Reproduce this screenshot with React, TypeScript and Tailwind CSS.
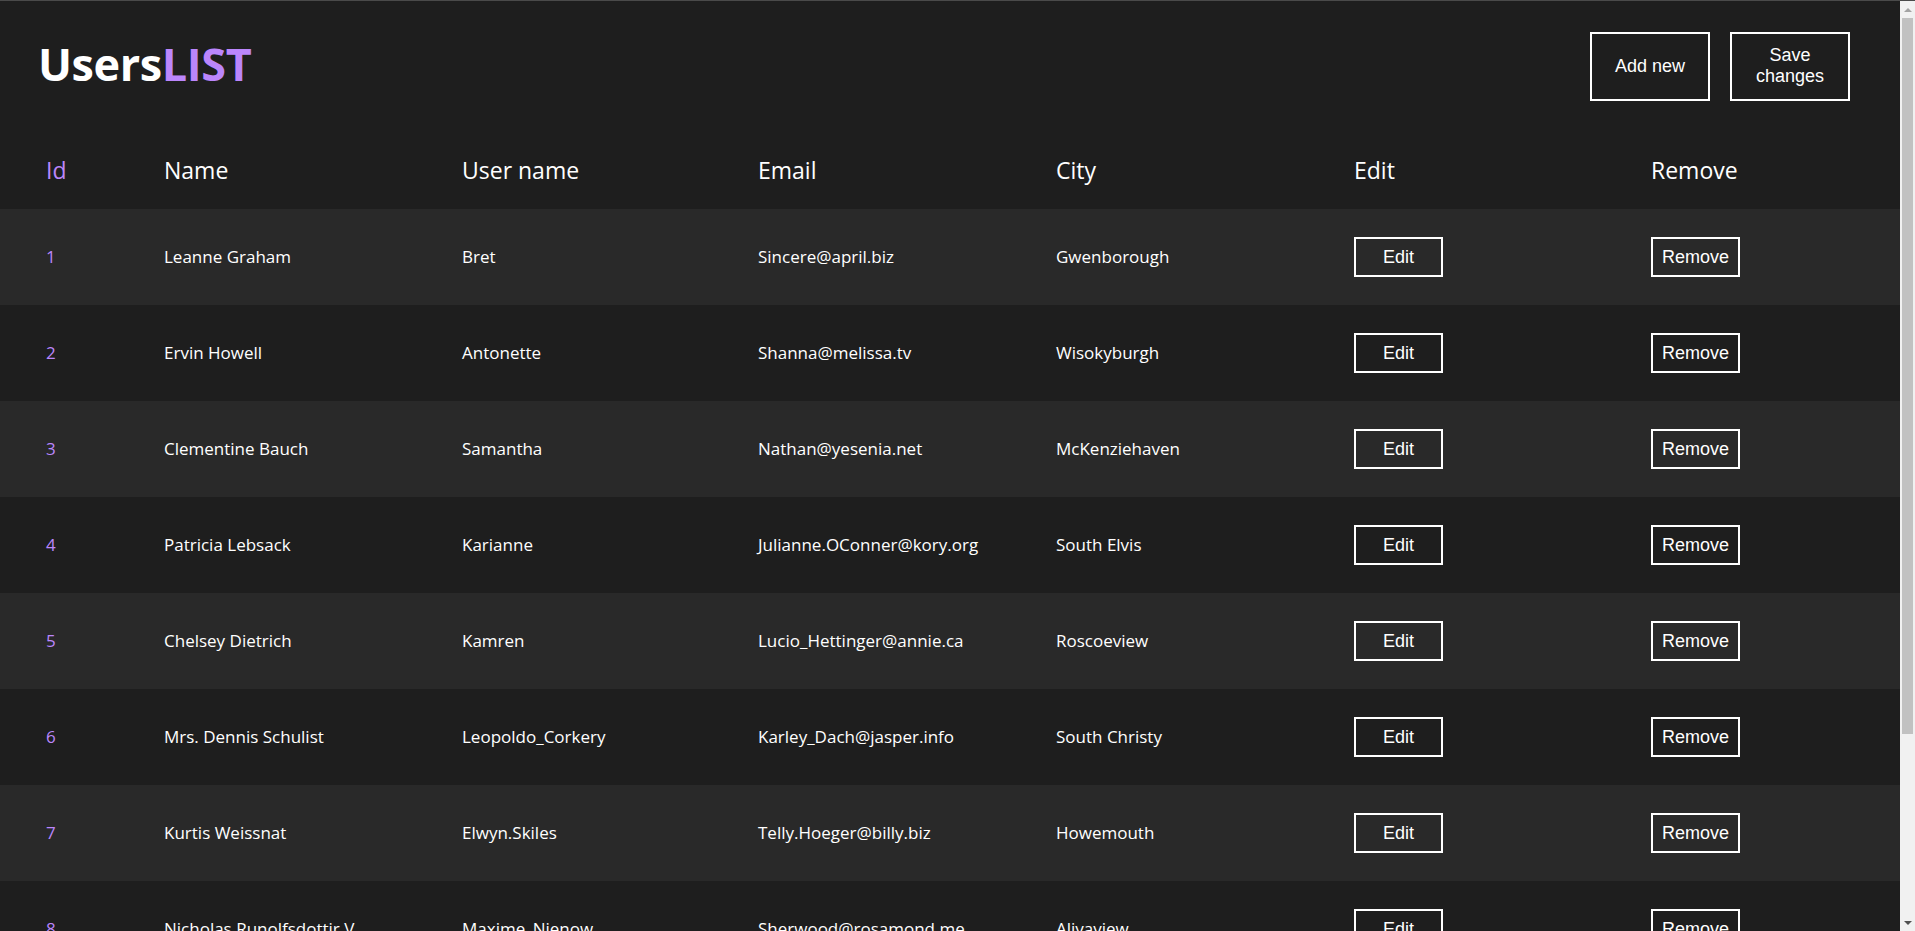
import { useState } from "react";

type User = {
    id: number;
    name: string;
    username: string;
    email: string;
    city: string;
};

const initialUsers: User[] = [
    { id: 1, name: "Leanne Graham", username: "Bret", email: "Sincere@april.biz", city: "Gwenborough" },
    { id: 2, name: "Ervin Howell", username: "Antonette", email: "Shanna@melissa.tv", city: "Wisokyburgh" },
    { id: 3, name: "Clementine Bauch", username: "Samantha", email: "Nathan@yesenia.net", city: "McKenziehaven" },
    { id: 4, name: "Patricia Lebsack", username: "Karianne", email: "Julianne.OConner@kory.org", city: "South Elvis" },
    { id: 5, name: "Chelsey Dietrich", username: "Kamren", email: "Lucio_Hettinger@annie.ca", city: "Roscoeview" },
    { id: 6, name: "Mrs. Dennis Schulist", username: "Leopoldo_Corkery", email: "Karley_Dach@jasper.info", city: "South Christy" },
    { id: 7, name: "Kurtis Weissnat", username: "Elwyn.Skiles", email: "Telly.Hoeger@billy.biz", city: "Howemouth" },
    { id: 8, name: "Nicholas Runolfsdottir V", username: "Maxime_Nienow", email: "Sherwood@rosamond.me", city: "Aliyaview" },
    { id: 9, name: "Glenna Reichert", username: "Delphine", email: "Chaim_McDermott@dana.io", city: "Bartholomebury" },
    { id: 10, name: "Clementina DuBuque", username: "Moriah.Stanton", email: "Rey.Padberg@karina.biz", city: "Lebsackbury" },
];

const cols = "grid grid-cols-[164px_298px_296px_298px_298px_297px_1fr] items-center";

// the page's scrollbar, as the browser drew it
function Scrollbar() {
    return (
        <div className="w-[15px] shrink-0 flex flex-col bg-[#f1f1f1]">
            <div className="h-[17px] flex items-center justify-center">
                <div className="w-0 h-0 border-x-[4px] border-x-transparent border-b-[4px] border-b-[#a3a3a3]" />
            </div>
            <div className="flex-1 px-[2px]">
                <div className="h-[716px] bg-[#c1c1c1]" />
            </div>
            <div className="h-[17px] flex items-center justify-center">
                <div className="w-0 h-0 border-x-[4px] border-x-transparent border-t-[4px] border-t-[#505050]" />
            </div>
        </div>
    );
}

export default function App() {
    const [users, setUsers] = useState(initialUsers);

    return (
        <div className="h-screen flex overflow-hidden bg-[#1e1e1e] text-white border-t border-[#4a4a4a] font-['Open_Sans',sans-serif]">

            <main className="flex-1 overflow-hidden">

                <header className="flex items-center justify-between h-[130px] pl-[38px] pr-[50px]">
                    <h1 className="text-[45px] font-bold tracking-[-0.4px] pb-[4px]">
                        Users<span className="text-[#bb86fc]">LIST</span>
                    </h1>

                    <div className="flex gap-5 font-['Liberation_Sans',Arial,sans-serif] text-[18px] leading-[21px]">
                        <button className="w-[120px] h-[69px] border-2 border-white">
                            Add new
                        </button>
                        <button className="w-[120px] h-[69px] border-2 border-white px-4">
                            Save changes
                        </button>
                    </div>
                </header>

                <div className={`${cols} h-[78px] text-[23px]`}>
                    <div className="pl-[46px] text-[#bb86fc]">Id</div>
                    <div>Name</div>
                    <div>User name</div>
                    <div>Email</div>
                    <div>City</div>
                    <div>Edit</div>
                    <div>Remove</div>
                </div>

                {users.map((user, i) => (
                    <div
                        key={user.id}
                        className={`${cols} h-[96px] text-[17px] ${i % 2 === 0 ? "bg-[#292929]" : "bg-[#1e1e1e]"}`}
                    >
                        <div className="pl-[46px] text-[#bb86fc]">{user.id}</div>
                        <div>{user.name}</div>
                        <div>{user.username}</div>
                        <div>{user.email}</div>
                        <div>{user.city}</div>
                        <div>
                            <button className="w-[89px] h-[40px] border-2 border-white font-['Liberation_Sans',Arial,sans-serif] text-[18px]">
                                Edit
                            </button>
                        </div>
                        <div>
                            <button
                                onClick={() => setUsers(users.filter((u) => u.id !== user.id))}
                                className="w-[89px] h-[40px] border-2 border-white font-['Liberation_Sans',Arial,sans-serif] text-[18px]"
                            >
                                Remove
                            </button>
                        </div>
                    </div>
                ))}

            </main>

            <Scrollbar />

        </div>
    );
}
